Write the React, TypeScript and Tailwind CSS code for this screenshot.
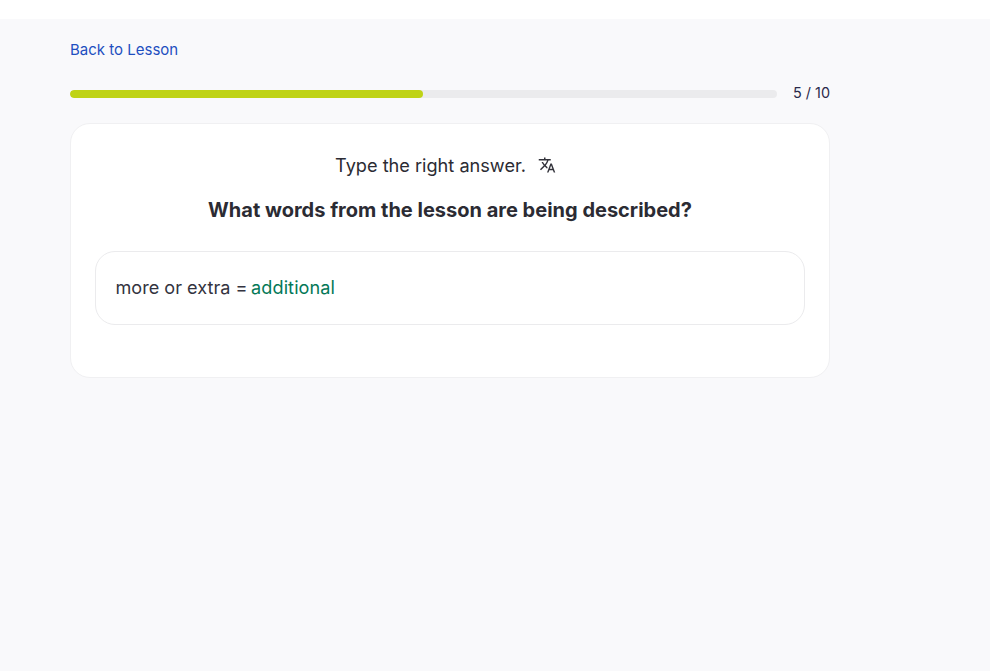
import React from 'react';
import { MdTranslate } from 'react-icons/md';

const App: React.FC = () => {
  return (
    <div className="min-h-[671px] bg-white font-['Inter',sans-serif]">
      <div className="h-[19px] bg-white" />
      <div className="h-[652px] bg-[#f9f9fb] pl-[70px] pt-[21px]">
        <a href="#" className="block h-[20px] text-[15px] leading-[20px] text-[#1e4fc0]">
          Back to Lesson
        </a>

        {/* Progress */}
        <div className="mt-[30px] flex h-[8px] w-[760px] items-center justify-between">
          <div className="h-2 w-[707px] overflow-hidden rounded-full bg-[#ebebed]">
            <div className="h-full w-[353px] rounded-full bg-[#bfd316]" />
          </div>
          <span className="-mt-[2px] text-[14.4px] leading-5 text-[#2a2a4a]">5 / 10</span>
        </div>

        {/* Question card */}
        <div className="mt-[25px] h-[255px] w-[760px] rounded-[20px] border border-[#f0f0f2] bg-white px-6 pt-[27px]">
          <div className="flex h-[28px] items-center justify-center pr-[9px] text-[18.15px] leading-7 text-[#2b2b33]">
            <span>Type the right answer.</span>
            <MdTranslate className="ml-3 h-[18px] w-[18px] text-[#33333b]" />
          </div>
          <h2 className="mt-[17px] h-[28px] text-center text-xl font-bold leading-7 text-[#2b2b33]">
            What words from the lesson are being described?
          </h2>
          <div className="mt-[27px] flex h-[74px] items-center rounded-[20px] border border-[#ebebed] pl-[19.5px] pr-5 text-[18.1px] text-[#333340]">
            more or extra =&nbsp;<span className="-ml-[1.5px] tracking-[0.1px] text-[#047857]">additional</span>
          </div>
        </div>
      </div>
    </div>
  );
};

export default App;
